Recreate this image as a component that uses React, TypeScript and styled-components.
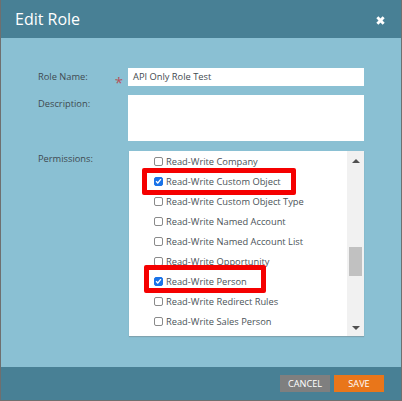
import React from 'react'
import styled, { createGlobalStyle } from 'styled-components'

const GlobalStyle = createGlobalStyle`
    html, body {
        margin: 0;
        padding: 0;
        background: #6f6f6f;
    }
`

const Dialog = styled.div`
    width: 400px;
    height: 400px;
    margin-left: 1px;
    display: flex;
    flex-direction: column;
    font-family: 'Open Sans', sans-serif;
    color: #3f4a50;
`

const Header = styled.header`
    height: 38px;
    flex-shrink: 0;
    background: #488095;
    display: flex;
    align-items: center;
    justify-content: space-between;
    padding: 0 16px 0 14px;
    color: #fff;
`

const Title = styled.h1`
    margin: 0;
    font-size: 16px;
    font-weight: 400;
`

const CloseIcon = styled.svg`
    width: 9px;
    height: 9px;
    margin-top: 3px;
`

const Body = styled.div`
    flex: 1;
    background: #8ac0d3;
    padding: 30px 37px 0 0;
    display: grid;
    grid-template-columns: 127px 1fr;
    grid-template-rows: 18px 46px 186px;
    row-gap: 9px;
    position: relative;
`

const Label = styled.label`
    font-size: 9.3px;
    line-height: 18px;
    padding-left: 37px;
    position: relative;
    display: block;
`

const Star = styled.span`
    position: absolute;
    right: 5px;
    top: 5px;
    color: #b5535c;
    font-size: 15px;
`

const TextField = styled.div`
    background: #fff;
    font-size: 9.3px;
    line-height: 18px;
    padding-left: 5px;
`

const ListBox = styled.div`
    background: #fff;
    margin: 1px 0 0 1px;
    display: flex;
    justify-content: space-between;
    box-shadow: 0 1px 1px #7fa3b0;
`

const List = styled.ul`
    list-style: none;
    margin: 0;
    padding: 0 0 0 25px;
`

const Row = styled.li`
    height: 20px;
    display: flex;
    align-items: center;
    gap: 3px;
    font-size: 9.3px;
    white-space: nowrap;
    color: #4b5358;
`

const Box = styled.span<{ $checked?: boolean }>`
    width: 9px;
    height: 9px;
    box-sizing: border-box;
    border-radius: 2px;
    border: 1px solid ${(p) => (p.$checked ? '#1a73e8' : '#8a8a8a')};
    background: ${(p) => (p.$checked ? '#1a73e8' : '#fff')};
    display: flex;
    align-items: center;
    justify-content: center;
    flex-shrink: 0;
`

const Scrollbar = styled.div`
    width: 17px;
    background: #f1f1f1;
    display: flex;
    flex-direction: column;
    align-items: center;
    justify-content: space-between;
    padding: 8px 0 6px;
    position: relative;
    box-sizing: border-box;
`

const Thumb = styled.div`
    position: absolute;
    left: 2px;
    top: 96px;
    width: 13px;
    height: 29px;
    background: #c1c1c1;
`

const Arrow = styled.span<{ $down?: boolean }>`
    width: 0;
    height: 0;
    border-left: 4px solid transparent;
    border-right: 4px solid transparent;
    ${(p) => (p.$down ? 'border-top: 4px solid #505050;' : 'border-bottom: 4px solid #505050;')}
`

const Highlight = styled.div<{ $x: number; $y: number; $w: number; $h: number }>`
    position: absolute;
    left: ${(p) => p.$x}px;
    top: ${(p) => p.$y}px;
    width: ${(p) => p.$w}px;
    height: ${(p) => p.$h}px;
    box-sizing: border-box;
    border: 5px solid #f50000;
    border-radius: 2px;
`

const Footer = styled.footer`
    height: 33px;
    flex-shrink: 0;
    background: #488095;
    display: flex;
    align-items: flex-start;
    justify-content: flex-end;
    gap: 4px;
    padding: 8px 17px 0 0;
    box-sizing: border-box;
`

const FooterButton = styled.button<{ $primary?: boolean }>`
    width: 50px;
    height: 17px;
    border: 0;
    padding: 0;
    font-family: inherit;
    font-size: 9.2px;
    color: #fff;
    background: ${(p) => (p.$primary ? '#e9761a' : '#7f7f7f')};
`

const permissions = [
    { name: 'Read-Write Company' },
    { name: 'Read-Write Custom Object', checked: true },
    { name: 'Read-Write Custom Object Type' },
    { name: 'Read-Write Named Account' },
    { name: 'Read-Write Named Account List' },
    { name: 'Read-Write Opportunity' },
    { name: 'Read-Write Person', checked: true },
    { name: 'Read-Write Redirect Rules' },
    { name: 'Read-Write Sales Person' },
]

export default function App() {
    return (
        <>
            <GlobalStyle />
            <Dialog>
                <Header>
                    <Title>Edit Role</Title>
                    <CloseIcon viewBox="0 0 10 10">
                        <path d="M1.5 1.5 L8.5 8.5 M8.5 1.5 L1.5 8.5" stroke="#fff" strokeWidth="3.2" />
                    </CloseIcon>
                </Header>
                <Body>
                    <Label>
                        Role Name:
                        <Star>*</Star>
                    </Label>
                    <TextField>API Only Role Test</TextField>
                    <Label>Description:</Label>
                    <TextField />
                    <Label>Permissions:</Label>
                    <ListBox>
                        <List>
                            {permissions.map((p) => (
                                <Row key={p.name}>
                                    <Box $checked={p.checked}>
                                        {p.checked && (
                                            <svg width="8" height="8" viewBox="0 0 8 8">
                                                <path d="M1.2 4.2 L3.2 6.2 L6.8 1.8" stroke="#fff" strokeWidth="1.5" fill="none" />
                                            </svg>
                                        )}
                                    </Box>
                                    {p.name}
                                </Row>
                            ))}
                        </List>
                        <Scrollbar>
                            <Arrow />
                            <Thumb />
                            <Arrow $down />
                        </Scrollbar>
                    </ListBox>
                    <Highlight $x={141} $y={130} $w={154} $h={27} />
                    <Highlight $x={143} $y={227} $w={122} $h={28} />
                </Body>
                <Footer>
                    <FooterButton>CANCEL</FooterButton>
                    <FooterButton $primary>SAVE</FooterButton>
                </Footer>
            </Dialog>
        </>
    )
}
